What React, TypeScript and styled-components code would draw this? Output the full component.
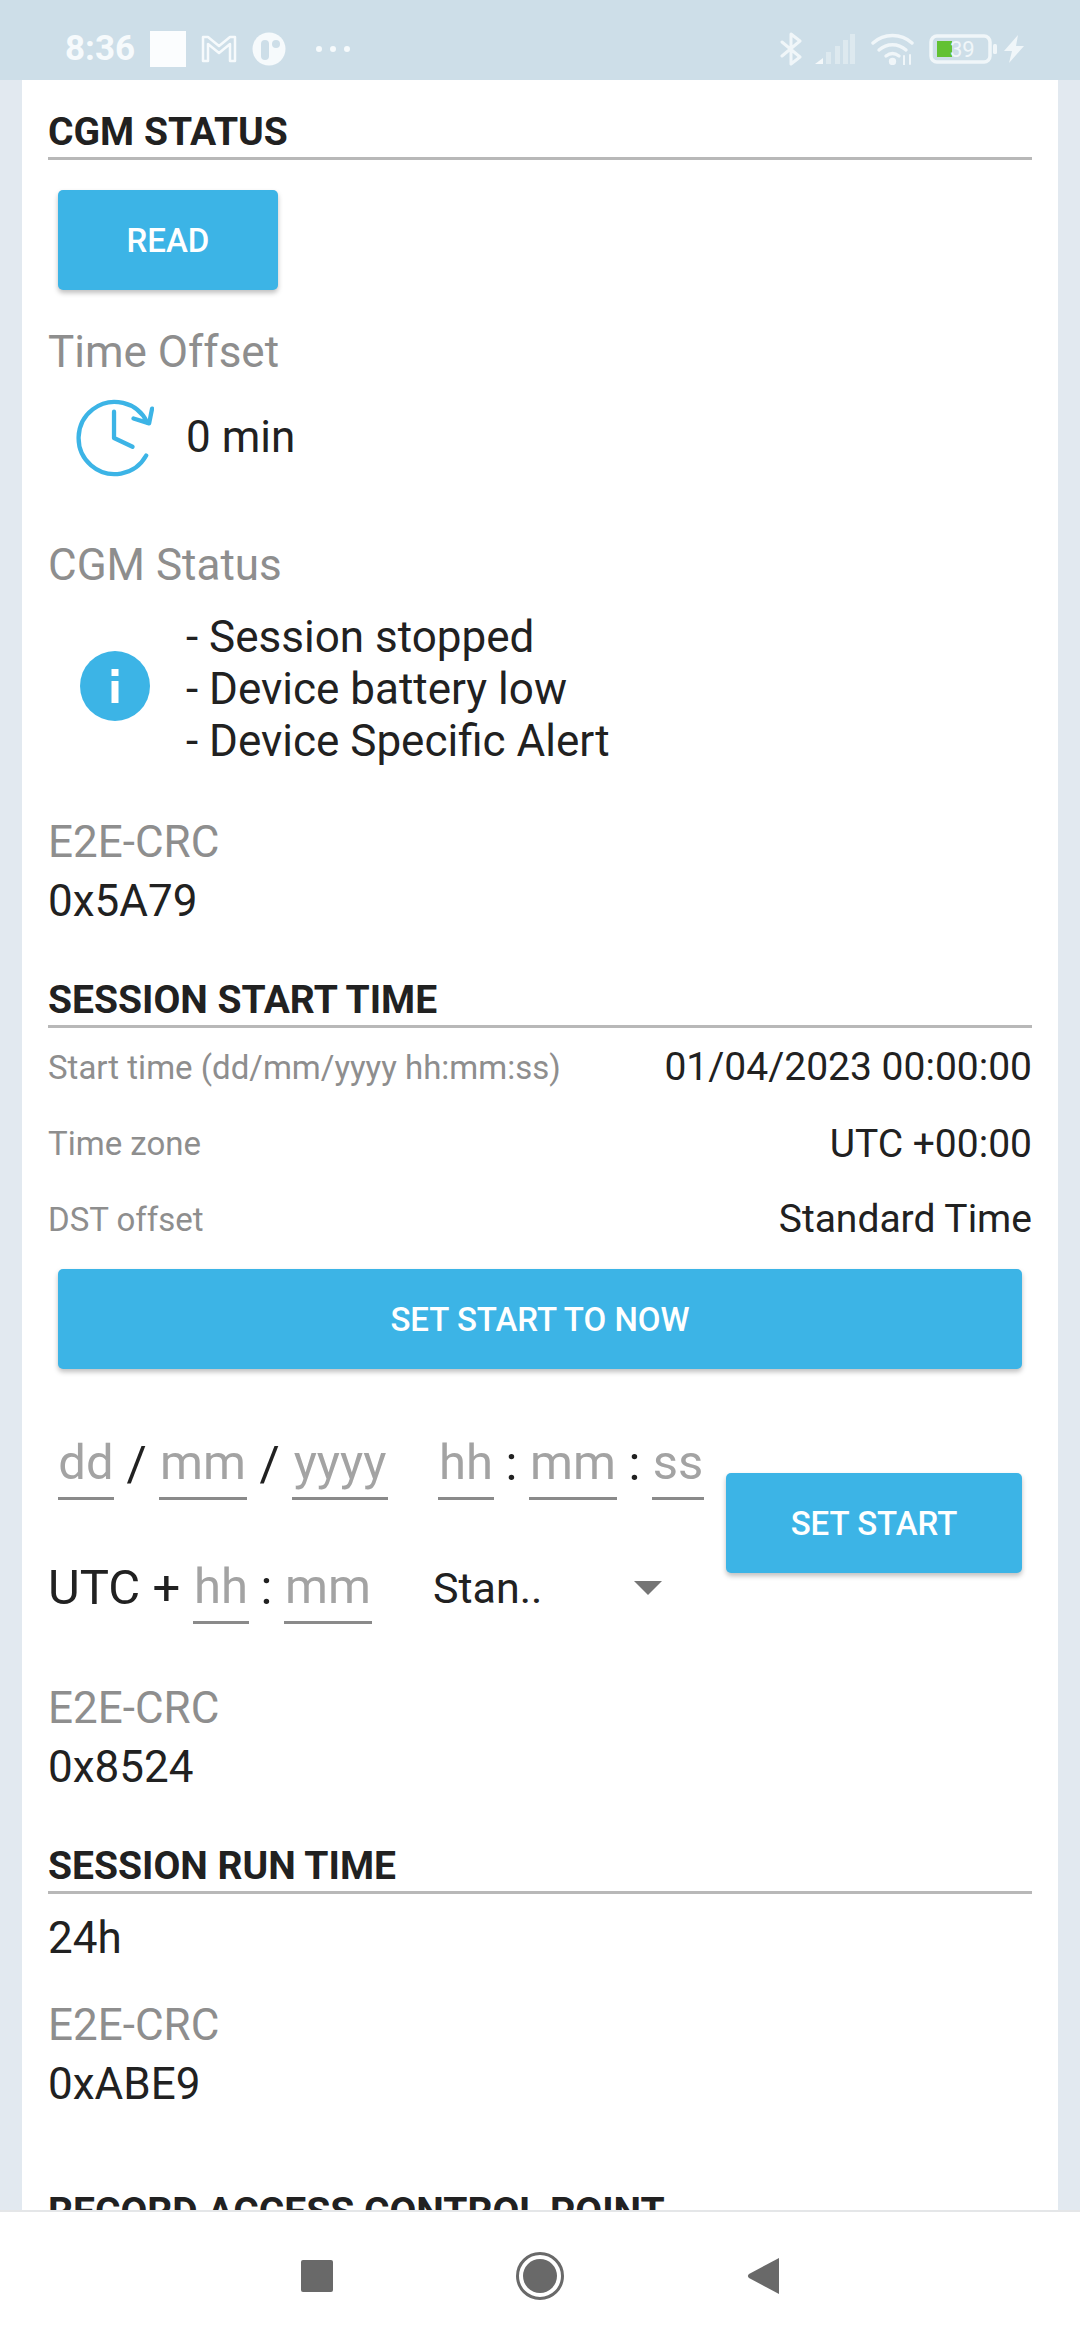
import React from 'react';
import styled, { createGlobalStyle } from 'styled-components';

const GlobalStyle = createGlobalStyle`
    html, body {
        margin: 0;
        padding: 0;
        background: #e2e9f0;
    }
    * {
        box-sizing: border-box;
    }
`;

const Screen = styled.div`
    width: 1080px;
    height: 2340px;
    display: flex;
    flex-direction: column;
    overflow: hidden;
    background: #e2e9f0;
    font-family: Roboto, "Liberation Sans", sans-serif;
    color: #212121;
`;

const StatusBar = styled.div`
    flex: 0 0 80px;
    height: 80px;
    display: flex;
    align-items: center;
    padding: 18px 56px 0 65px;
    background: #cddee8;
    color: #f6fafc;
`;

const Clock = styled.div`
    width: 85px;
    font-size: 35px;
    font-weight: 700;
    line-height: 40px;
`;

const Glyph = styled.div<{ $left?: number }>`
    display: flex;
    align-items: center;
    margin-left: ${(p) => p.$left ?? 0}px;
`;

const Spacer = styled.div`
    flex: 1;
`;

const Sheet = styled.div`
    flex: 1;
    min-height: 0;
    margin: 0 22px;
    padding: 26px 26px 0;
    overflow: hidden;
    background: #fff;
`;

const SectionTitle = styled.div`
    height: 54px;
    line-height: 52px;
    font-size: 39px;
    font-weight: 700;
    border-bottom: 3px solid #b8b8b8;
`;

const Button = styled.button<{ $width: number }>`
    display: block;
    width: ${(p) => p.$width}px;
    height: 100px;
    padding: 0;
    border: 0;
    border-radius: 5px;
    background: #3cb4e6;
    color: #fff;
    font-family: inherit;
    font-size: 33px;
    font-weight: 500;
    box-shadow: 0 3px 5px rgba(0, 0, 0, 0.25);
`;

const ReadButton = styled(Button)`
    margin: 30px 0 0 10px;
`;

const FieldLabel = styled.div<{ $top: number }>`
    margin-top: ${(p) => p.$top}px;
    font-size: 44px;
    line-height: 52px;
    color: #8e8e8e;
`;

const FieldValue = styled.div<{ $top?: number }>`
    margin-top: ${(p) => p.$top ?? 0}px;
    font-size: 44px;
    line-height: 52px;
`;

const IconRow = styled.div<{ $top: number }>`
    display: flex;
    align-items: center;
    gap: 32px;
    margin: ${(p) => p.$top}px 0 0 28px;
`;

const IconSlot = styled.div`
    width: 78px;
    display: flex;
    justify-content: center;
    flex: none;
`;

const InfoSlot = styled(IconSlot)`
    margin-bottom: 6px;
`;

const SessionSection = styled.div`
    margin-top: 47px;
`;

const Row = styled.div<{ $height: number }>`
    display: flex;
    justify-content: space-between;
    align-items: center;
    height: ${(p) => p.$height}px;
`;

const RowLabel = styled.div`
    font-size: 33px;
    color: #8e8e8e;
`;

const RowValue = styled.div`
    font-size: 39px;
`;

const WideButton = styled(Button)`
    margin: 12px 0 0 10px;
`;

const DateForm = styled.div`
    display: flex;
    justify-content: space-between;
    height: 313px;
    padding: 0 10px;
`;

const DateInputs = styled.div`
    flex: none;
    display: flex;
    flex-direction: column;
    padding-top: 65px;
`;

const InputLine = styled.div`
    display: flex;
    align-items: flex-start;
    height: 124px;
`;

const Slot = styled.div<{ $width: number; $left?: number }>`
    width: ${(p) => p.$width}px;
    margin-left: ${(p) => p.$left ?? 0}px;
    height: 66px;
    line-height: 58px;
    font-size: 49px;
    text-align: center;
    color: #a3a3a3;
    border-bottom: 3px solid #8a8a8a;
`;

const Separator = styled.div<{ $width: number }>`
    width: ${(p) => p.$width}px;
    height: 66px;
    line-height: 60px;
    font-size: 49px;
    text-align: center;
`;

const UtcLabel = styled.div`
    margin-left: -10px;
    width: 145px;
    height: 66px;
    line-height: 60px;
    font-size: 49px;
`;

const SelectBox = styled.div`
    display: flex;
    align-items: center;
    justify-content: space-between;
    margin-left: 61px;
    width: 229px;
    height: 60px;
    font-size: 43px;
`;

const Caret = styled.div`
    width: 0;
    height: 0;
    border-left: 14px solid transparent;
    border-right: 14px solid transparent;
    border-top: 14px solid #757575;
`;

const SetStartButton = styled(Button)`
    margin-top: 104px;
`;

const RunSection = styled.div`
    margin-top: 47px;
`;

const RecordTitle = styled.div`
    margin-top: 76px;
    line-height: 52px;
    font-size: 39px;
    font-weight: 700;
`;

const NavBar = styled.div`
    flex: 0 0 130px;
    height: 130px;
    display: flex;
    align-items: center;
    justify-content: center;
    padding-bottom: 1px;
    border-top: 2px solid #e4e6e8;
    background: #fff;
`;

const NavItem = styled.div`
    width: 223px;
    display: flex;
    justify-content: center;
`;

const StatusSquare = () => (
    <svg width="36" height="36" viewBox="0 0 36 36">
        <rect width="36" height="36" fill="#fbfdfe" />
    </svg>
);

const StatusM = () => (
    <svg width="36" height="28" viewBox="0 0 36 28" fill="none" stroke="#f6fafc" strokeWidth="2.5" strokeLinejoin="round">
        <path d="M2 2h5l11 9 11-9h5v24h-5V9l-11 9L7 9v17H2z" />
    </svg>
);

const StatusDial = () => (
    <svg width="34" height="34" viewBox="0 0 34 34">
        <circle cx="17" cy="17" r="16.5" fill="#f6fafc" />
        <rect x="9" y="8" width="8" height="20" rx="4" fill="#cddee8" />
        <circle cx="24" cy="12" r="4" fill="#cddee8" />
    </svg>
);

const StatusDots = () => (
    <svg width="36" height="8" viewBox="0 0 36 8" fill="#f6fafc">
        <circle cx="4" cy="4" r="3" />
        <circle cx="18" cy="4" r="3" />
        <circle cx="32" cy="4" r="3" />
    </svg>
);

const Bluetooth = () => (
    <svg width="22" height="34" viewBox="0 0 22 34" fill="none" stroke="#f0f6f9" strokeWidth="3" strokeLinecap="round" strokeLinejoin="round">
        <path d="M2 10l18 15-9 7V2l9 7L2 24" />
    </svg>
);

const Signal = () => (
    <svg width="40" height="30" viewBox="0 0 40 30">
        <path d="M0 30l8-6v6z" fill="#f4f8fa" />
        <g fill="#dde9ef">
            <rect x="11" y="18" width="5" height="12" />
            <rect x="20" y="12" width="5" height="18" />
            <rect x="28" y="6" width="5" height="24" />
            <rect x="35" y="0" width="5" height="30" />
        </g>
    </svg>
);

const Wifi = () => (
    <svg width="44" height="32" viewBox="0 0 44 32" fill="none" stroke="#f0f6f9" strokeWidth="3.4" strokeLinecap="round">
        <path d="M2 10C13 0 30 0 41 10" />
        <path d="M8 17c8-7 19-7 27 0" />
        <path d="M15 23c4-3 9-3 13 0" />
        <circle cx="21.5" cy="28.5" r="2" fill="#f0f6f9" />
        <path d="M33 23v9M39 22v9" strokeWidth="2" />
    </svg>
);

const Battery = () => (
    <svg width="68" height="30" viewBox="0 0 68 30">
        <rect x="2" y="2" width="59" height="26" rx="6" fill="none" stroke="#f0f6f9" strokeWidth="3.5" />
        <rect x="8" y="7" width="15" height="16" fill="#62c133" />
        <rect x="64" y="10" width="4" height="10" rx="1.5" fill="#f0f6f9" />
        <text x="21" y="23" fontSize="22" fontFamily="Roboto, sans-serif" fill="#f0f6f9">39</text>
    </svg>
);

const Bolt = () => (
    <svg width="20" height="28" viewBox="0 0 20 28" fill="#f0f6f9">
        <path d="M14 0L0 16h8L5 28l15-17h-8z" />
    </svg>
);

const OffsetClock = () => (
    <svg width="80" height="80" viewBox="0 0 80 80" fill="none" stroke="#3cb4e6" strokeWidth="4.4" strokeLinecap="round" strokeLinejoin="round">
        <path d="M72 59A37 37 0 1 1 73 25" />
        <path d="M78 11l-3 15-16-5" />
        <path d="M39 14v27l19 9" />
    </svg>
);

const InfoIcon = () => (
    <svg width="70" height="70" viewBox="0 0 70 70">
        <circle cx="35" cy="35" r="35" fill="#3cb4e6" />
        <rect x="31.500" y="18" width="7" height="7" fill="#fff" />
        <rect x="31.500" y="30" width="7" height="22" fill="#fff" />
    </svg>
);

const NavSquare = () => (
    <svg width="32" height="32" viewBox="0 0 32 32">
        <rect width="32" height="32" rx="2" fill="#696969" />
    </svg>
);

const NavCircle = () => (
    <svg width="48" height="48" viewBox="0 0 48 48">
        <circle cx="24" cy="24" r="22.500" fill="none" stroke="#696969" strokeWidth="3" />
        <circle cx="24" cy="24" r="17" fill="#696969" />
    </svg>
);

const NavBack = () => (
    <svg width="32" height="38" viewBox="0 0 32 38">
        <path d="M32 1v36L2 21c-1.500-1-1.500-3 0-4z" fill="#696969" />
    </svg>
);

const App = () => {
    return (
        <Screen>
            <GlobalStyle />
            <StatusBar>
                <Clock>8:36</Clock>
                <Glyph><StatusSquare /></Glyph>
                <Glyph $left={15}><StatusM /></Glyph>
                <Glyph $left={15}><StatusDial /></Glyph>
                <Glyph $left={29}><StatusDots /></Glyph>
                <Spacer />
                <Glyph><Bluetooth /></Glyph>
                <Glyph $left={13}><Signal /></Glyph>
                <Glyph $left={16}><Wifi /></Glyph>
                <Glyph $left={14}><Battery /></Glyph>
                <Glyph $left={7}><Bolt /></Glyph>
            </StatusBar>

            <Sheet>
                <SectionTitle>CGM STATUS</SectionTitle>
                <ReadButton $width={220}>READ</ReadButton>
                <FieldLabel $top={36}>Time Offset</FieldLabel>
                <IconRow $top={19}>
                    <IconSlot><OffsetClock /></IconSlot>
                    <FieldValue>0 min</FieldValue>
                </IconRow>
                <FieldLabel $top={62}>CGM Status</FieldLabel>
                <IconRow $top={20}>
                    <InfoSlot><InfoIcon /></InfoSlot>
                    <div>
                        <FieldValue>- Session stopped</FieldValue>
                        <FieldValue>- Device battery low</FieldValue>
                        <FieldValue>- Device Specific Alert</FieldValue>
                    </div>
                </IconRow>
                <FieldLabel $top={49}>E2E-CRC</FieldLabel>
                <FieldValue $top={7}>0x5A79</FieldValue>

                <SessionSection>
                    <SectionTitle>SESSION START TIME</SectionTitle>
                    <Row $height={78}>
                        <RowLabel>Start time (dd/mm/yyyy hh:mm:ss)</RowLabel>
                        <RowValue>01/04/2023 00:00:00</RowValue>
                    </Row>
                    <Row $height={75}>
                        <RowLabel>Time zone</RowLabel>
                        <RowValue>UTC +00:00</RowValue>
                    </Row>
                    <Row $height={76}>
                        <RowLabel>DST offset</RowLabel>
                        <RowValue>Standard Time</RowValue>
                    </Row>
                    <WideButton $width={964}>SET START TO NOW</WideButton>
                    <DateForm>
                        <DateInputs>
                            <InputLine>
                                <Slot $width={56}>dd</Slot>
                                <Separator $width={45}>/</Separator>
                                <Slot $width={88}>mm</Slot>
                                <Separator $width={45}>/</Separator>
                                <Slot $width={96}>yyyy</Slot>
                                <Slot $width={56} $left={50}>hh</Slot>
                                <Separator $width={35}>:</Separator>
                                <Slot $width={88}>mm</Slot>
                                <Separator $width={35}>:</Separator>
                                <Slot $width={52}>ss</Slot>
                            </InputLine>
                            <InputLine>
                                <UtcLabel>UTC +</UtcLabel>
                                <Slot $width={56}>hh</Slot>
                                <Separator $width={35}>:</Separator>
                                <Slot $width={88}>mm</Slot>
                                <SelectBox>
                                    Stan..
                                    <Caret />
                                </SelectBox>
                            </InputLine>
                        </DateInputs>
                        <SetStartButton $width={296}>SET START</SetStartButton>
                    </DateForm>
                    <FieldLabel $top={0}>E2E-CRC</FieldLabel>
                    <FieldValue $top={7}>0x8524</FieldValue>
                </SessionSection>

                <RunSection>
                    <SectionTitle>SESSION RUN TIME</SectionTitle>
                    <FieldValue $top={18}>24h</FieldValue>
                    <FieldLabel $top={35}>E2E-CRC</FieldLabel>
                    <FieldValue $top={7}>0xABE9</FieldValue>
                </RunSection>

                <RecordTitle>RECORD ACCESS CONTROL POINT</RecordTitle>
            </Sheet>

            <NavBar>
                <NavItem><NavSquare /></NavItem>
                <NavItem><NavCircle /></NavItem>
                <NavItem><NavBack /></NavItem>
            </NavBar>
        </Screen>
    );
};

export default App;
